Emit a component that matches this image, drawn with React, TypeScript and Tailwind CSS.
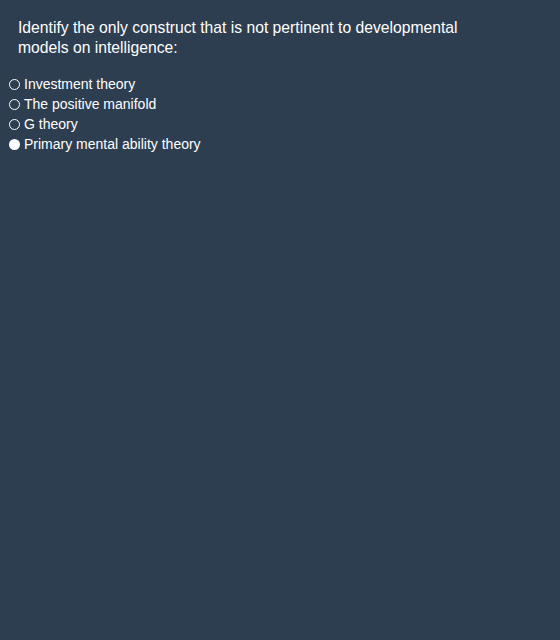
import React from "react";

const options = [
  { label: "Investment theory", checked: false },
  { label: "The positive manifold", checked: false },
  { label: "G theory", checked: false },
  { label: "Primary mental ability theory", checked: true },
];

export default function App() {
  return (
    <div className="w-[560px] h-[640px] bg-[#2d3e50] text-white font-['Liberation_Sans',Arial,sans-serif]">
      <div className="pt-[18px] pl-[18px] w-[480px] text-[15.7px] leading-[20px]">
        Identify the only construct that is not pertinent to developmental models on intelligence:
      </div>
      <div className="mt-[16px] pl-[9px] flex flex-col">
        {options.map((o) => (
          <div key={o.label} className="flex items-center h-[20px] text-[14px]">
            <span
              className={
                o.checked
                  ? "w-[11px] h-[11px] rounded-full bg-white"
                  : "w-[11px] h-[11px] rounded-full border border-white"
              }
            />
            <span className="ml-[4px]">{o.label}</span>
          </div>
        ))}
      </div>
    </div>
  );
}
